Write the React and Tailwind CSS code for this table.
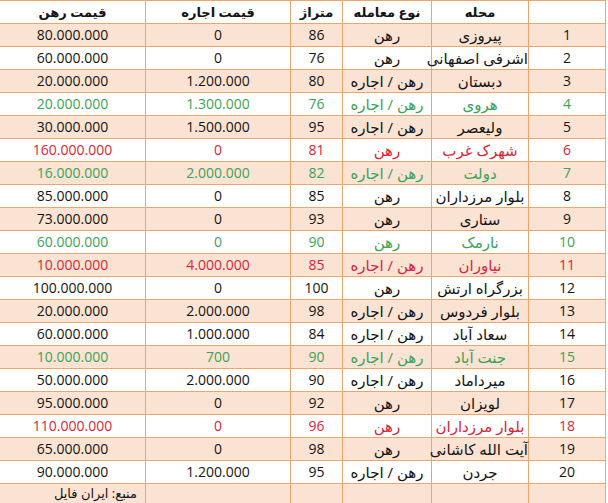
const rows = [
  ["1", "پیروزی", "رهن", "86", "0", "80.000.000"],
  ["2", "اشرفی اصفهانی", "رهن", "76", "0", "60.000.000"],
  ["3", "دبستان", "رهن / اجاره", "80", "1.200.000", "20.000.000"],
  ["4", "هروی", "رهن / اجاره", "76", "1.300.000", "20.000.000", "green"],
  ["5", "ولیعصر", "رهن / اجاره", "95", "1.500.000", "30.000.000"],
  ["6", "شهرک غرب", "رهن", "81", "0", "160.000.000", "red"],
  ["7", "دولت", "رهن / اجاره", "82", "2.000.000", "16.000.000", "green"],
  ["8", "بلوار مرزداران", "رهن", "85", "0", "85.000.000"],
  ["9", "ستاری", "رهن", "93", "0", "73.000.000"],
  ["10", "نارمک", "رهن", "90", "0", "60.000.000", "green"],
  ["11", "نیاوران", "رهن / اجاره", "85", "4.000.000", "10.000.000", "red"],
  ["12", "بزرگراه ارتش", "رهن", "100", "0", "100.000.000"],
  ["13", "بلوار فردوس", "رهن / اجاره", "98", "2.000.000", "20.000.000"],
  ["14", "سعاد آباد", "رهن / اجاره", "84", "1.000.000", "60.000.000"],
  ["15", "جنت آباد", "رهن / اجاره", "90", "700", "10.000.000", "green"],
  ["16", "میرداماد", "رهن / اجاره", "90", "2.000.000", "50.000.000"],
  ["17", "لویزان", "رهن", "92", "0", "95.000.000"],
  ["18", "بلوار مرزداران", "رهن", "96", "0", "110.000.000", "red"],
  ["19", "آیت الله کاشانی", "رهن", "98", "0", "65.000.000"],
  ["20", "جردن", "رهن / اجاره", "95", "1.200.000", "90.000.000"],
];

const tones = {
  green: "text-[#3aa257]",
  red: "text-[#d9253a]",
};

// excel-ish cell, orange grid lines
const base = "border border-[#eea56a] p-0 align-middle whitespace-nowrap";
const cell = base + " text-center";
const head = cell + " font-bold text-[13px]";

export default function App() {
  return (
    <div className="w-[608px] h-[503px] overflow-hidden bg-white">
      <table
        dir="rtl"
        className="table-fixed border-collapse w-[606px] -ml-px text-[14px] leading-none text-[#141414] font-['Open_Sans','DejaVu_Sans',sans-serif]"
      >
        <colgroup>
          <col className="w-[77px]" />
          <col className="w-[97px]" />
          <col className="w-[89px]" />
          <col className="w-[52px]" />
          <col className="w-[145px]" />
          <col className="w-[146px]" />
        </colgroup>
        <thead>
          <tr className="h-[23px] bg-white">
            <th className={cell}></th>
            <th className={head}>محله</th>
            <th className={head}>نوع معامله</th>
            <th className={head}>متراژ</th>
            <th className={head}>قیمت اجاره</th>
            <th className={head}>قیمت رهن</th>
          </tr>
        </thead>
        <tbody>
          {rows.map((r, i) => (
            <tr
              key={r[0]}
              className={
                "h-[23px] " +
                (i % 2 === 0 ? "bg-[#fbe3d3] " : "bg-white ") +
                (r[6] ? tones[r[6]] : "")
              }
            >
              <td className={cell}>{r[0]}</td>
              <td className={cell + " text-[15px]"}>{r[1]}</td>
              <td className={cell + " text-[15px]"}>{r[2]}</td>
              <td className={cell}>{r[3]}</td>
              <td className={cell}>{r[4]}</td>
              <td className={cell}>{r[5]}</td>
            </tr>
          ))}
          <tr className="h-[20px] bg-[#fbe3d3]">
            <td className={cell}></td>
            <td className={cell}></td>
            <td className={cell}></td>
            <td className={cell}></td>
            <td className={cell}></td>
            <td className={base + " text-right pr-[8px] text-[13px]"}>منبع: ایران فایل</td>
          </tr>
        </tbody>
      </table>
    </div>
  );
}
